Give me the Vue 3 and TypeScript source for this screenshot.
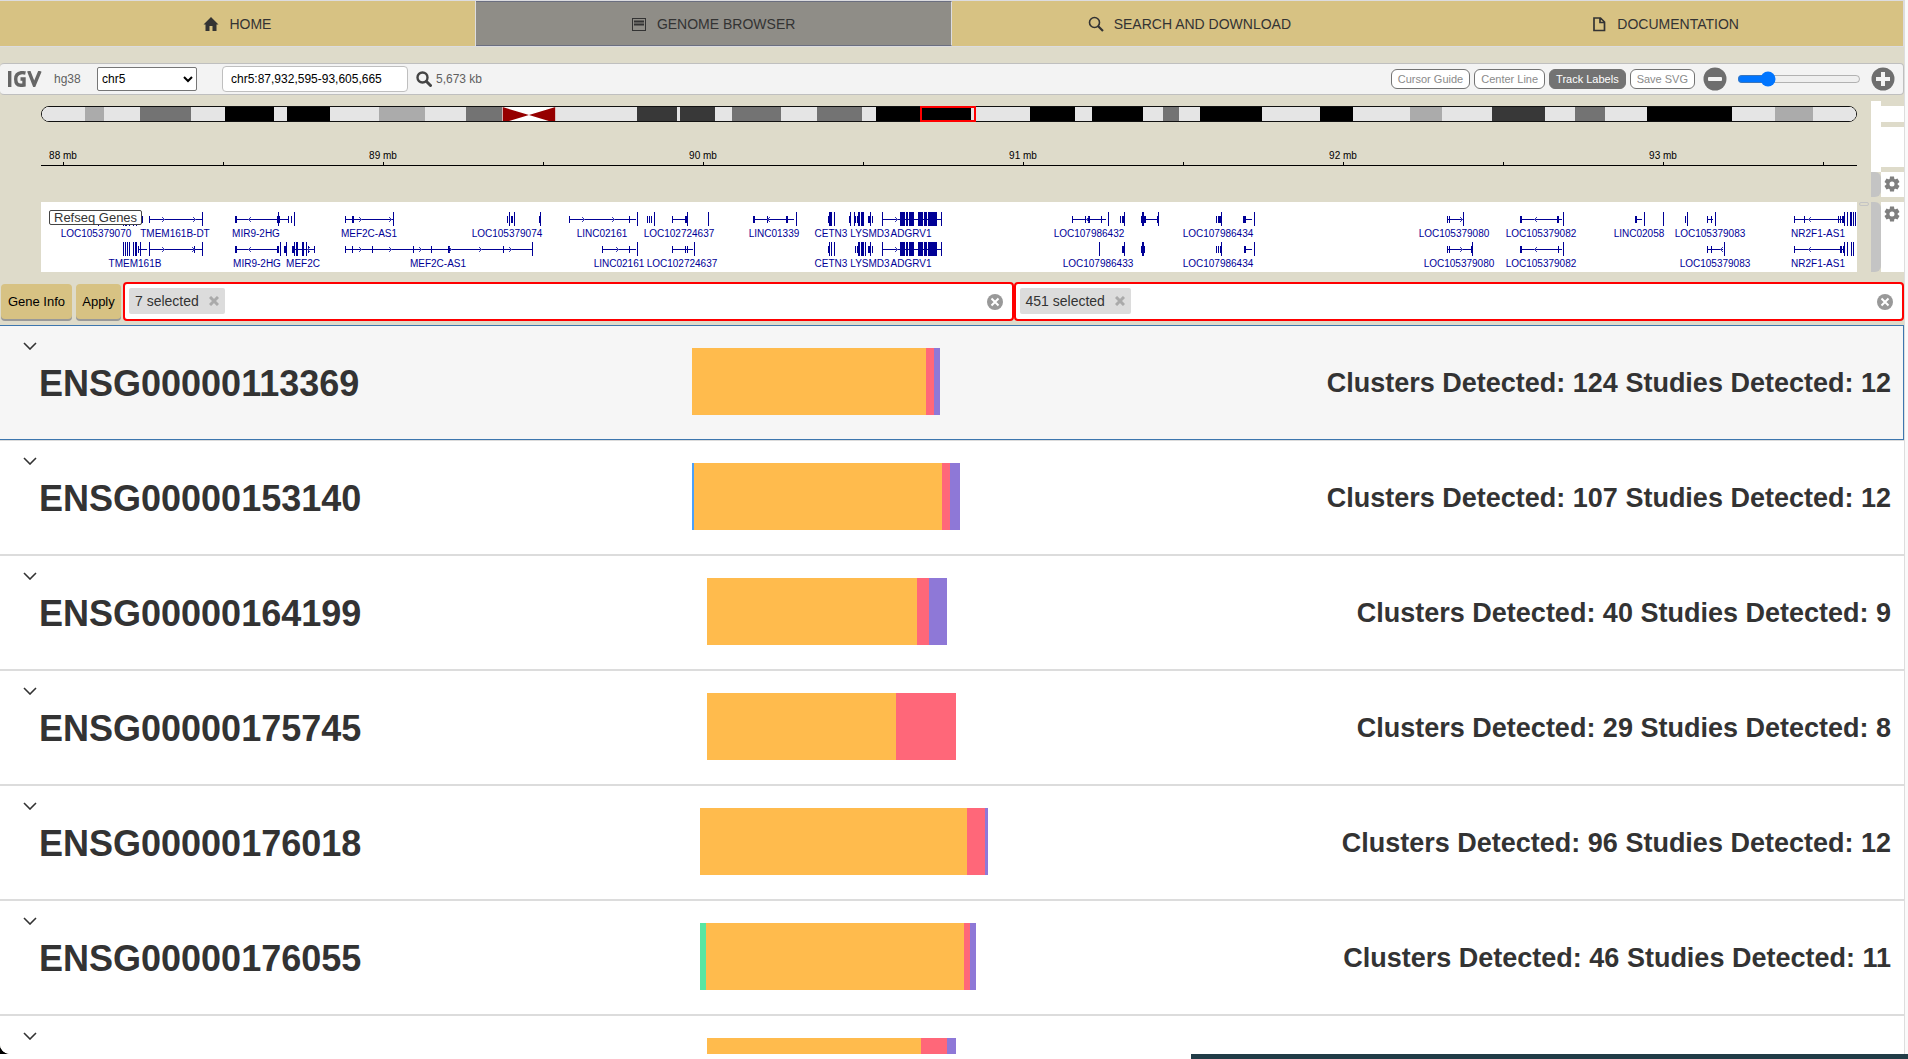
<script setup lang="ts">
import { ref } from 'vue'

interface Tab { label: string; icon: string; active?: boolean; split?: boolean }
interface Segment { color: string; size: number }
interface GeneRow { id: string; clusters: number; studies: number; start: number; segments: Segment[] }
interface Transcript { lane: number; line?: [number, number]; tall?: number[][]; short?: number[][]; fwd?: number[]; rev?: number[] }

const tabs: Tab[] = [
  { label: 'HOME', icon: 'home', split: true },
  { label: 'GENOME BROWSER', icon: 'browser', active: true, split: true },
  { label: 'SEARCH AND DOWNLOAD', icon: 'search' },
  { label: 'DOCUMENTATION', icon: 'doc' },
]

const chromosome = ref('chr5')
const locus = ref('chr5:87,932,595-93,605,665')
const zoom = ref(21)
const toggles = [
  { label: 'Cursor Guide', on: false },
  { label: 'Center Line', on: false },
  { label: 'Track Labels', on: true },
  { label: 'Save SVG', on: false },
]

/* Track coordinates run from ORIGIN over SPAN units and scale with the column. */
const ORIGIN = 41
const SPAN = 1816
const at = (x: number) => `${((x - ORIGIN) / SPAN) * 100}%`
const span = (w: number) => `${(w / SPAN) * 100}%`

const bands: [number, number, string][] = [
  [84, 103, '#ababab'], [139, 190, '#737373'], [224, 273, '#000'], [286, 329, '#000'],
  [378, 424, '#ababab'], [465, 502, '#737373'], [637, 677, '#383838'], [680, 715, '#383838'],
  [732, 781, '#737373'], [817, 862, '#737373'], [876, 971, '#000'], [1030, 1075, '#000'],
  [1092, 1143, '#000'], [1163, 1179, '#737373'], [1200, 1262, '#000'], [1320, 1353, '#000'],
  [1411, 1443, '#ababab'], [1493, 1546, '#383838'], [1576, 1606, '#737373'], [1648, 1733, '#000'],
  [1776, 1814, '#ababab'],
]

const ticks = Array.from({ length: 12 }, (_, i) => ({
  x: 63 + i * 160,
  label: i % 2 === 0 ? `${88 + i / 2} mb` : '',
}))

const adgrv: number[][] = [[882, 1], [900, 5], [906, 2], [909, 5], [918, 5], [924, 3], [928, 9], [941, 1]]
const transcripts: Transcript[] = [
  { lane: 0, tall: [[98, 1], [123, 1], [125, 2], [129, 1], [133, 1], [136, 1]], short: [[142, 1]] },
  { lane: 0, line: [149, 202], short: [[149, 1]], tall: [[202, 1]], fwd: [162, 193] },
  { lane: 0, line: [235, 278], short: [[235, 2], [277, 3]], tall: [[278, 1]], rev: [250] },
  { lane: 0, line: [280, 289], short: [[288, 1], [291, 1]], tall: [[294, 1]] },
  { lane: 0, line: [345, 393], short: [[345, 1], [352, 2]], tall: [[393, 1]], fwd: [359, 389] },
  { lane: 0, short: [[507, 1], [511, 2]], tall: [[509, 1], [514, 1]] },
  { lane: 0, short: [[539, 1]], tall: [[540, 1]] },
  { lane: 0, line: [569, 636], short: [[569, 1], [629, 1]], tall: [[637, 1]], fwd: [582, 612] },
  { lane: 0, short: [[647, 1], [649, 1], [651, 1]], tall: [[654, 1]] },
  { lane: 0, line: [672, 686], short: [[672, 1], [685, 2]], tall: [[687, 1]] },
  { lane: 0, tall: [[708, 1]] },
  { lane: 0, line: [753, 794], short: [[753, 2], [767, 1], [786, 2]], tall: [[796, 1]], rev: [769] },
  { lane: 0, short: [[828, 2]], tall: [[829, 3], [834, 1]] },
  { lane: 0, short: [[849, 1], [855, 1], [857, 1]], tall: [[850, 1], [854, 1], [858, 2], [861, 3]] },
  { lane: 0, short: [[868, 2], [872, 1]], tall: [[870, 1]] },
  { lane: 0, line: [882, 941], tall: adgrv, fwd: [895] },
  { lane: 0, line: [1072, 1106], short: [[1072, 1], [1085, 1], [1088, 2], [1101, 1]], tall: [[1108, 1]], rev: [1088] },
  { lane: 0, short: [[1120, 1], [1122, 2]], tall: [[1124, 1]] },
  { lane: 0, line: [1141, 1158], short: [[1141, 5], [1157, 1]], tall: [[1142, 2], [1158, 1]] },
  { lane: 0, short: [[1216, 1], [1218, 3]], tall: [[1221, 1]] },
  { lane: 0, line: [1243, 1252], short: [[1243, 3]], tall: [[1254, 1]] },
  { lane: 0, line: [1447, 1461], short: [[1447, 1], [1449, 1]], tall: [[1463, 1]], fwd: [1460] },
  { lane: 0, line: [1520, 1562], short: [[1520, 2], [1557, 2]], tall: [[1563, 1]], rev: [1536] },
  { lane: 0, line: [1635, 1642], short: [[1635, 2]], tall: [[1644, 1], [1663, 1]] },
  { lane: 0, short: [[1685, 1]], tall: [[1687, 1]] },
  { lane: 0, line: [1707, 1713], short: [[1707, 1], [1711, 1]], tall: [[1715, 1]] },
  { lane: 0, line: [1794, 1845], short: [[1794, 1], [1804, 1], [1838, 1], [1840, 1], [1842, 2]], tall: [[1844, 1], [1847, 1], [1850, 2], [1853, 1], [1855, 1]], rev: [1810] },

  { lane: 1, line: [139, 147], short: [[138, 1]], tall: [[123, 1], [125, 1], [127, 1], [129, 1], [133, 1], [135, 2], [140, 1]] },
  { lane: 1, line: [149, 202], short: [[194, 1]], tall: [[149, 1], [202, 1]], fwd: [162, 192] },
  { lane: 1, line: [235, 277], short: [[235, 2], [277, 2]], tall: [[280, 1]], rev: [250] },
  { lane: 1, short: [[284, 2]], tall: [[286, 1]] },
  { lane: 1, line: [292, 314], short: [[292, 2], [308, 1], [314, 1]], tall: [[294, 1], [296, 2], [302, 2], [306, 1]], rev: [309] },
  { lane: 1, line: [345, 532], short: [[345, 1], [352, 1], [372, 1], [413, 1], [431, 1], [448, 2], [503, 1]], tall: [[532, 1]], fwd: [359, 389, 419, 449, 479, 509] },
  { lane: 1, line: [602, 636], short: [[602, 1], [629, 1]], tall: [[637, 1]], fwd: [616] },
  { lane: 1, line: [672, 693], short: [[672, 1], [685, 1], [687, 1]], tall: [[694, 1]] },
  { lane: 1, short: [[828, 1]], tall: [[829, 1], [831, 1], [834, 1]] },
  { lane: 1, short: [[855, 1], [857, 1]], tall: [[858, 2], [861, 3], [865, 1]] },
  { lane: 1, short: [[868, 2], [872, 1]], tall: [[870, 1]] },
  { lane: 1, line: [882, 941], tall: adgrv, fwd: [895] },
  { lane: 1, tall: [[1099, 1]] },
  { lane: 1, short: [[1122, 2]], tall: [[1124, 1]] },
  { lane: 1, short: [[1141, 4]], tall: [[1142, 2]] },
  { lane: 1, short: [[1216, 1], [1218, 1], [1220, 1]], tall: [[1221, 1]] },
  { lane: 1, line: [1244, 1252], short: [[1244, 2]], tall: [[1254, 1]] },
  { lane: 1, line: [1447, 1471], short: [[1447, 1], [1449, 1], [1471, 1]], tall: [[1472, 1]], fwd: [1460] },
  { lane: 1, line: [1520, 1562], short: [[1520, 2], [1558, 1]], tall: [[1563, 1]], rev: [1536] },
  { lane: 1, line: [1707, 1723], short: [[1707, 1], [1711, 1]], tall: [[1724, 1]], rev: [1722] },
  { lane: 1, line: [1794, 1843], short: [[1794, 1], [1840, 2], [1843, 1]], tall: [[1844, 1], [1847, 1], [1851, 1], [1853, 1]], rev: [1810] },
]

const geneLabels: [string, number, number][] = [
  ['LOC105379070', 96, 0], ['TMEM161B-DT', 175, 0], ['MIR9-2HG', 256, 0], ['MEF2C-AS1', 369, 0],
  ['LOC105379074', 507, 0], ['LINC02161', 602, 0], ['LOC102724637', 679, 0], ['LINC01339', 774, 0],
  ['CETN3', 831, 0], ['LYSMD3', 870, 0], ['ADGRV1', 911, 0], ['LOC107986432', 1089, 0],
  ['LOC107986434', 1218, 0], ['LOC105379080', 1454, 0], ['LOC105379082', 1541, 0],
  ['LINC02058', 1639, 0], ['LOC105379083', 1710, 0], ['NR2F1-AS1', 1818, 0],
  ['TMEM161B', 135, 1], ['MIR9-2HG', 257, 1], ['MEF2C', 303, 1], ['MEF2C-AS1', 438, 1],
  ['LINC02161', 619, 1], ['LOC102724637', 682, 1], ['CETN3', 831, 1], ['LYSMD3', 870, 1],
  ['ADGRV1', 911, 1], ['LOC107986433', 1098, 1], ['LOC107986434', 1218, 1],
  ['LOC105379080', 1459, 1], ['LOC105379082', 1541, 1], ['LOC105379083', 1715, 1],
  ['NR2F1-AS1', 1818, 1],
]

const filters = ['7 selected', '451 selected']

const AMBER = '#ffbb4d'
const ROSE = '#ff6779'
const VIOLET = '#8e78d7'
const BLUE = '#4ba0f8'
const GREEN = '#58e6a2'
const CHART = 634
const share = (n: number) => `${(n / CHART) * 100}%`

const rows: GeneRow[] = [
  { id: 'ENSG00000113369', clusters: 124, studies: 12, start: 58, segments: [{ color: AMBER, size: 234 }, { color: ROSE, size: 8 }, { color: VIOLET, size: 6 }] },
  { id: 'ENSG00000153140', clusters: 107, studies: 12, start: 58, segments: [{ color: BLUE, size: 2 }, { color: AMBER, size: 248 }, { color: ROSE, size: 8 }, { color: VIOLET, size: 10 }] },
  { id: 'ENSG00000164199', clusters: 40, studies: 9, start: 73, segments: [{ color: AMBER, size: 210 }, { color: ROSE, size: 12 }, { color: VIOLET, size: 18 }] },
  { id: 'ENSG00000175745', clusters: 29, studies: 8, start: 73, segments: [{ color: AMBER, size: 189 }, { color: ROSE, size: 60 }] },
  { id: 'ENSG00000176018', clusters: 96, studies: 12, start: 66, segments: [{ color: AMBER, size: 267 }, { color: ROSE, size: 18 }, { color: VIOLET, size: 3 }] },
  { id: 'ENSG00000176055', clusters: 46, studies: 11, start: 66, segments: [{ color: GREEN, size: 6 }, { color: AMBER, size: 258 }, { color: ROSE, size: 6 }, { color: VIOLET, size: 6 }] },
  { id: '', clusters: 0, studies: 0, start: 73, segments: [{ color: AMBER, size: 214 }, { color: ROSE, size: 26 }, { color: VIOLET, size: 9 }] },
]
</script>

<template>
  <div class="shell">
    <div class="frame">
      <div class="page">
        <nav class="nav">
          <a v-for="t in tabs" :key="t.label" href="#" class="tab" :class="{ active: t.active, split: t.split }">
            <svg class="tab-icon" viewBox="0 0 16 16" aria-hidden="true">
              <path v-if="t.icon === 'home'" d="M8 1L0.500 8.500H2.500V15H6.500V10H9.500V15H13.500V8.500H15.500Z" fill="#333" />
              <g v-else-if="t.icon === 'browser'">
                <rect x="1.500" y="2.500" width="13" height="12" fill="none" stroke="#333" />
                <path d="M3 5.500H13M3 8.500H13" stroke="#333" stroke-width="2" />
              </g>
              <g v-else-if="t.icon === 'search'" fill="none" stroke="#333">
                <circle cx="6.500" cy="6.500" r="5" stroke-width="1.600" />
                <path d="M10 10L15 15" stroke-width="2.200" />
              </g>
              <path v-else d="M3 2H9.500L13.500 6V14.500H3ZM9 2.500V6.500H13" fill="none" stroke="#333" stroke-width="1.700" />
            </svg>
            <span>{{ t.label }}</span>
          </a>
        </nav>

        <div class="toolbar">
          <svg class="logo" viewBox="0 0 34 16" role="img" aria-label="IGV logo">
            <g fill="none" stroke="#666" stroke-width="3.400">
              <path d="M1.700 0V16" />
              <path d="M17.500 2Q15 1.500 13 1.700Q7.700 2.500 7.700 8Q7.700 14.300 12.500 14.300Q14.500 14.300 16 14V8H12.500" />
              <path d="M20.700 0L26.200 14L32 0" />
            </g>
          </svg>
          <span class="genome">hg38</span>
          <select v-model="chromosome" class="chrom" aria-label="Chromosome">
            <option>chr5</option>
          </select>
          <input v-model="locus" class="locus" type="text" aria-label="Locus" />
          <svg class="find" viewBox="0 0 16 16" aria-hidden="true">
            <circle cx="6.500" cy="6.500" r="5" fill="none" stroke="#444" stroke-width="2.400" />
            <path d="M10.500 10.500L14.500 14.500" stroke="#444" stroke-width="3" stroke-linecap="round" />
          </svg>
          <span class="window-size">5,673 kb</span>
          <div class="controls">
            <button v-for="b in toggles" :key="b.label" type="button" class="toggle" :class="{ on: b.on }">{{ b.label }}</button>
            <button type="button" class="round zoom-out" aria-label="Zoom out">
              <svg viewBox="0 0 24 24"><circle cx="12" cy="12" r="11.500" fill="#6e6e6e" /><rect x="5" y="10" width="14" height="4" rx="1" fill="#f3f3f3" /></svg>
            </button>
            <input v-model.number="zoom" class="slider" type="range" min="0" max="100" aria-label="Zoom" />
            <button type="button" class="round" aria-label="Zoom in">
              <svg viewBox="0 0 24 24"><circle cx="12" cy="12" r="11.500" fill="#6e6e6e" /><path d="M12 5V19M5 12H19" stroke="#f3f3f3" stroke-width="4" /></svg>
            </button>
          </div>
        </div>

        <div class="igv">
          <div class="tracks">
            <svg class="ideogram" aria-label="Chromosome 5 ideogram">
              <rect width="100%" height="16" fill="#fff" />
              <rect class="chrom-fill" x="0" y="0" width="100%" height="16" rx="7" />
              <g shape-rendering="crispEdges">
                <rect v-for="b in bands" :key="b[0]" :x="at(b[0])" y="0" :width="span(b[1] - b[0])" height="16" :fill="b[2]" />
              </g>
              <svg :x="at(502)" y="0" :width="span(53)" height="16" viewBox="0 0 53 16" preserveAspectRatio="none">
                <rect width="53" height="16" fill="#fff" />
                <path d="M0 0L26.500 8L0 16ZM53 0L26.500 8L53 16Z" fill="#960000" />
              </svg>
            </svg>
            <svg class="ruler" aria-label="Genomic position ruler">
              <rect x="0" y="38" width="100%" height="1" />
              <g v-for="t in ticks" :key="t.x">
                <rect :x="at(t.x)" y="35" width="1" height="3" />
                <text v-if="t.label" :x="at(t.x)" y="32">{{ t.label }}</text>
              </g>
            </svg>
            <div class="sequence"></div>
            <div class="genes">
              <svg class="gene-map" aria-label="Refseq gene models">
                <g v-for="(g, i) in transcripts" :key="i" shape-rendering="crispEdges">
                  <rect v-if="g.line" :x="at(g.line[0])" :y="17 + g.lane * 30" :width="span(g.line[1] - g.line[0])" height="1" />
                  <rect v-for="e in g.tall" :key="'t' + e[0]" :x="at(e[0])" :y="10 + g.lane * 30" :width="span(e[1])" height="14" />
                  <rect v-for="e in g.short" :key="'s' + e[0]" :x="at(e[0])" :y="14 + g.lane * 30" :width="span(e[1])" height="7" />
                  <svg v-for="a in g.fwd" :key="'f' + a" :x="at(a)" :y="15 + g.lane * 30" width="3" height="5" class="arrow"><path d="M0 0L2 2.500L0 5" /></svg>
                  <svg v-for="a in g.rev" :key="'r' + a" :x="at(a - 2)" :y="15 + g.lane * 30" width="3" height="5" class="arrow"><path d="M3 0L1 2.500L3 5" /></svg>
                </g>
                <text v-for="l in geneLabels" :key="l[0] + l[1] + l[2]" :x="at(l[1])" :y="35 + l[2] * 30">{{ l[0] }}</text>
              </svg>
              <span class="track-label">Refseq Genes</span>
            </div>
            <span class="view-box"></span>
          </div>
          <div class="grip-col"><span class="grip"></span></div>
          <div class="drag-col">
            <div class="drag-blank"></div>
            <div class="drag short"></div>
            <div class="drag tall"></div>
          </div>
          <div class="gear-col">
            <div class="cell h16"></div>
            <div class="cell h40"></div>
            <div v-for="h in ['h25', 'h70']" :key="h" class="cell" :class="h">
              <button type="button" class="gear" aria-label="Track settings">
                <svg viewBox="0 0 16 16">
                  <circle cx="8" cy="8" r="4" fill="none" stroke="#7f7f7f" stroke-width="3" />
                  <path v-for="d in [0, 60, 120, 180, 240, 300]" :key="d" d="M6 0.500H10L10.500 4H5.500Z" fill="#7f7f7f" :transform="`rotate(${d} 8 8)`" />
                </svg>
              </button>
            </div>
          </div>
        </div>

        <div class="actions">
          <button type="button" class="action info">Gene Info</button>
          <button type="button" class="action apply">Apply</button>
          <div class="pickers">
            <div v-for="f in filters" :key="f" class="picker">
              <span class="chip">
                {{ f }}
                <button type="button" class="chip-x" aria-label="Remove">
                  <svg viewBox="0 0 10 10"><path d="M1 1L9 9M9 1L1 9" stroke="#aaa" stroke-width="3" /></svg>
                </button>
              </span>
              <button type="button" class="clear" aria-label="Clear">
                <svg viewBox="0 0 16 16"><circle cx="8" cy="8" r="8" fill="#999" /><path d="M4.500 4.500L11.500 11.500M11.500 4.500L4.500 11.500" stroke="#fff" stroke-width="2" /></svg>
              </button>
            </div>
          </div>
        </div>

        <div class="results">
          <div v-for="(r, i) in rows" :key="i" class="result">
            <button type="button" class="row" :class="{ focused: i === 0 }" aria-expanded="false">
              <span class="name">
                <svg class="chevron" viewBox="0 0 14 8" aria-hidden="true"><path d="M1 1L7 7L13 1" fill="none" stroke="#333" stroke-width="1.600" /></svg>
                <span class="gene-id">{{ r.id }}</span>
              </span>
              <span class="chart">
                <span class="offset" :style="{ width: share(r.start) }"></span>
                <span v-for="s in r.segments" :key="s.color" class="segment" :style="{ width: share(s.size), background: s.color }"></span>
              </span>
              <span v-if="r.id" class="stats">Clusters Detected: {{ r.clusters }} Studies Detected: {{ r.studies }}</span>
            </button>
          </div>
        </div>
      </div>
      <div class="gutter"></div>
    </div>
    <div class="dock"></div>
  </div>
</template>

<style>
body {
  margin: 0;
  background: #fff;
}
</style>

<style scoped>
* {
  box-sizing: border-box;
}
.shell {
  display: flex;
  flex-direction: column;
  height: 100vh;
  overflow: hidden;
  font-family: "Liberation Sans", Arial, Helvetica, sans-serif;
  color: #333;
}
.frame {
  flex: 1;
  min-height: 0;
  display: flex;
  background: #000;
}
.page {
  flex: 1;
  min-width: 0;
  overflow: hidden;
  background: #dedbca;
  border-bottom-left-radius: 10px;
}
.gutter {
  width: 4px;
  background: #fafafa;
  border-left: 1px solid #ddd;
}
.dock {
  height: 5px;
  margin-left: 62.4%;
  background: #213c47;
}
button {
  font-family: inherit;
  cursor: pointer;
}
svg {
  display: block;
}

.nav {
  display: flex;
  height: 47px;
  border: 1px solid #dcdce0;
  border-left: 0;
}
.tab {
  flex: 0 0 25%;
  display: flex;
  align-items: center;
  justify-content: center;
  gap: 10px;
  background: #d7c283;
  color: #333;
  font-size: 14px;
  text-decoration: none;
}
.tab.split {
  border-right: 1px solid #dcdce0;
}
.tab.active {
  background: #8f8d87;
  border-top: 1px solid #6b6f80;
  border-bottom: 1px solid #6b6f80;
}
.tab-icon {
  width: 16px;
  height: 16px;
}

.toolbar {
  display: flex;
  align-items: center;
  height: 32px;
  margin-top: 16px;
  padding: 0 8px;
  border: 1px solid #bfbfbf;
  border-left: 0;
  border-radius: 4px;
  background: #f3f3f3;
  font-size: 12px;
  color: #5f5f5f;
}
.logo {
  width: 34px;
  height: 16px;
}
.genome {
  margin-left: 12px;
  width: 43px;
}
.chrom {
  width: 100px;
  height: 24px;
  padding: 0;
  border: 1px solid #767676;
  border-radius: 2px;
  background: #fff;
  color: #000;
  font-family: inherit;
  font-size: 12px;
}
.locus {
  width: 186px;
  height: 26px;
  margin-left: 25px;
  padding: 0 8px;
  border: 1px solid #bfbfbf;
  border-radius: 4px;
  background: #fff;
  color: #000;
  font-family: inherit;
  font-size: 12px;
}
.find {
  width: 16px;
  height: 16px;
  margin: 0 4px 0 8px;
}
.controls {
  display: flex;
  align-items: center;
  margin-left: auto;
}
.toggle {
  height: 20px;
  margin-right: 4px;
  padding: 0 6px;
  border: 1px solid #737373;
  border-radius: 6px;
  background: #fff;
  color: #8a8a8a;
  font-size: 11px;
  line-height: 16px;
}
.toggle.on {
  background: #737373;
  color: #fff;
}
.round {
  width: 24px;
  height: 24px;
  padding: 0;
  border: 0;
  background: none;
}
.zoom-out {
  margin-left: 4px;
}
.slider {
  width: 124px;
  height: 16px;
  margin: 0 10px;
}

.igv {
  display: flex;
  padding: 6px 0 0 41px;
}
.tracks {
  position: relative;
  flex: 1;
  min-width: 0;
  display: flex;
  flex-direction: column;
  gap: 5px;
  padding-top: 5px;
}
.ideogram {
  width: 100%;
  height: 16px;
  border: 1px solid #111;
  border-radius: 8px;
}
.chrom-fill {
  fill: #e5e5e5;
}
.view-box {
  position: absolute;
  top: 5px;
  left: 48.4%;
  width: 56px;
  height: 16px;
  border: 2px solid #f00;
}
.ruler {
  width: 100%;
  height: 40px;
  overflow: visible;
  font-size: 10px;
  text-anchor: middle;
}
.sequence {
  height: 25px;
}
.genes {
  position: relative;
  height: 70px;
  background: #fff;
}
.gene-map {
  width: 100%;
  height: 70px;
  fill: #000096;
  font-size: 10px;
  text-anchor: middle;
}
.arrow path {
  fill: none;
  stroke: #3c3cb0;
}
.track-label {
  position: absolute;
  top: 8px;
  left: 8px;
  height: 15px;
  padding: 0 4px;
  border: 1px solid #444;
  border-radius: 2px;
  background: #fff;
  font-size: 13px;
  line-height: 13px;
}
.grip-col {
  width: 14px;
  padding: 101px 2px 0;
}
.grip {
  display: block;
  height: 4px;
  border: 1px solid #c4c4c4;
  border-radius: 2px;
}
.drag-col {
  width: 10px;
  display: flex;
  flex-direction: column;
}
.drag-blank {
  height: 71px;
  background: #fff;
}
.drag {
  background: #c4c4c4;
  border-radius: 0 6px 6px 0;
}
.drag.short {
  height: 25px;
}
.drag.tall {
  height: 70px;
  margin-top: 5px;
}
.gear-col {
  width: 23px;
  display: flex;
  flex-direction: column;
  gap: 5px;
  padding-top: 5px;
}
.cell {
  background: #fff;
  padding: 4px 3px;
}
.h16 { height: 16px; }
.h40 { height: 40px; }
.h25 { height: 25px; }
.h70 { height: 70px; }
.gear {
  display: block;
  width: 16px;
  height: 16px;
  padding: 0;
  border: 0;
  background: none;
}

.actions {
  display: flex;
  gap: 4px;
  height: 39px;
  margin-top: 10px;
  padding-left: 1px;
}
.action {
  height: 35px;
  margin-top: 2px;
  padding: 0;
  border: 0;
  border-radius: 4px;
  background: #d7c283;
  box-shadow: 0 2px #999;
  color: #000;
  font-size: 13px;
}
.info {
  width: 71px;
}
.apply {
  width: 45px;
}
.pickers {
  flex: 1;
  display: flex;
  margin-left: -2px;
}
.picker {
  flex: 1 1 0;
  display: flex;
  align-items: flex-start;
  justify-content: space-between;
  padding: 4px 9px 0 4px;
  border: 2px solid #f00;
  border-radius: 4px;
  background: #fff;
}
.chip {
  display: flex;
  align-items: center;
  gap: 10px;
  height: 26px;
  padding: 0 6px;
  border-radius: 2px;
  background: #dcdcdc;
  font-size: 14px;
}
.chip-x {
  width: 10px;
  height: 10px;
  padding: 0;
  border: 0;
  background: none;
}
.clear {
  width: 16px;
  height: 16px;
  margin-top: 6px;
  padding: 0;
  border: 0;
  background: none;
}

.results {
  margin-top: 5px;
  background: #fff;
}
.result {
  height: 115px;
  padding-right: 1px;
  border-bottom: 2px solid #dcdcdc;
}
.row {
  display: grid;
  grid-template-columns: repeat(3, minmax(0, 1fr));
  align-items: start;
  width: 100%;
  height: 113px;
  padding: 0;
  border: 0;
  background: #fff;
  color: #333;
  text-align: left;
}
.row.focused {
  position: relative;
  background: #f6f6f6;
  outline: 1px solid #3d76ae;
}
.name {
  display: block;
  padding-top: 16px;
}
.chevron {
  width: 14px;
  height: 8px;
  margin-left: 23px;
}
.gene-id {
  display: block;
  margin-top: 13px;
  padding-left: 39px;
  font-size: 36px;
  font-weight: 700;
  line-height: 42px;
}
.chart {
  display: flex;
  height: 67px;
  margin-top: 22px;
}
.stats {
  padding: 41px 12px 0 0;
  font-size: 27px;
  font-weight: 700;
  line-height: 32px;
  text-align: right;
  white-space: nowrap;
}
</style>
